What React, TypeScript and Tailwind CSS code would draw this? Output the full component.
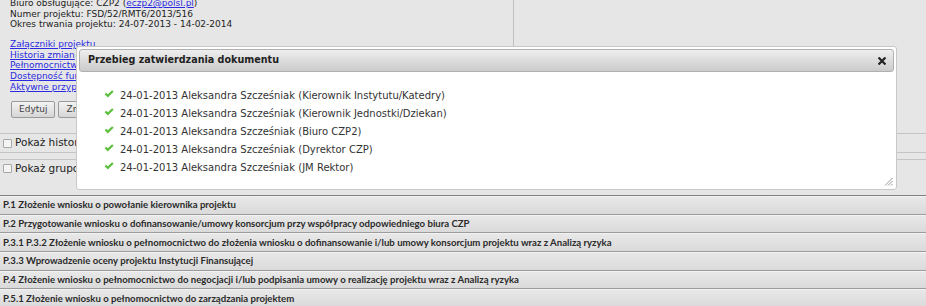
import React from "react";

const approvals = [
  "Kierownik Instytutu/Katedry",
  "Kierownik Jednostki/Dziekan",
  "Biuro CZP2",
  "Dyrektor CZP",
  "JM Rektor",
];

const steps = [
  "P.1 Złożenie wniosku o powołanie kierownika projektu",
  "P.2 Przygotowanie wniosku o dofinansowanie/umowy konsorcjum przy współpracy odpowiedniego biura CZP",
  "P.3.1 P.3.2 Złożenie wniosku o pełnomocnictwo do złożenia wniosku o dofinansowanie i/lub umowy konsorcjum projektu wraz z Analizą ryzyka",
  "P.3.3 Wprowadzenie oceny projektu Instytucji Finansującej",
  "P.4 Złożenie wniosku o pełnomocnictwo do negocjacji i/lub podpisania umowy o realizację projektu wraz z Analizą ryzyka",
  "P.5.1 Złożenie wniosku o pełnomocnictwo do zarządzania projektem",
];

function Check() {
  return (
    <svg width="10" height="8" viewBox="0 0 10 8" className="shrink-0">
      <path d="M0.6 4.2 L2.2 2.7 L3.8 4.3 L8.1 0.3 L9.6 1.8 L3.8 7.4 Z" fill="#5fbf3f" />
    </svg>
  );
}

function Box() {
  return (
    <span className="inline-block w-[9px] h-[9px] border border-[#a8a8a8] bg-[#f4f4f4] rounded-[1px] shrink-0" />
  );
}

export default function App() {
  return (
    <div
      className="relative w-[926px] h-[306px] overflow-hidden bg-[#e6e6e6] text-[#222]"
      style={{ fontFamily: '"DejaVu Sans", Verdana, sans-serif' }}
    >
      {/* top section */}
      <div className="flex h-[134px] border-b border-[#c4c4c4]">
        <div className="w-[514px] border-r border-[#c0c0c0] pl-[10px] text-[9px]">
          <div className="-mt-[2px] leading-[10.65px]">
            <div>
              Biuro obsługujące: CZP2 (<span className="text-[#2a2ae0] underline">eczp2@polsl.pl</span>)
            </div>
            <div>Numer projektu: FSD/52/RMT6/2013/516</div>
            <div>Okres trwania projektu: 24-07-2013 - 14-02-2014</div>
          </div>
          <div className="mt-[9px] leading-[10.7px] text-[#2a2ae0] underline">
            <div>Załączniki projektu</div>
            <div>Historia zmian</div>
            <div>Pełnomocnictwa</div>
            <div>Dostępność funkcji</div>
            <div>Aktywne przypomnienia</div>
          </div>
          <div className="mt-[8.5px] flex gap-[3px] pl-[1px]">
            <button className="h-[17px] px-[7px] text-[9px] text-[#444] border border-[#9a9a9a] rounded-[2px] bg-gradient-to-b from-[#f3f3f3] to-[#d6d6d6]">
              Edytuj
            </button>
            <button className="h-[17px] px-[7px] text-[9px] text-[#444] border border-[#9a9a9a] rounded-[2px] bg-gradient-to-b from-[#f3f3f3] to-[#d6d6d6]">
              Zmień status
            </button>
          </div>
        </div>
        <div className="flex-1" />
      </div>

      {/* checkbox rows */}
      <div className="h-[19px] border-b border-[#c4c4c4] flex items-center pl-[3px] gap-[3px] text-[10.5px]">
        <Box />
        <span>Pokaż historię zmian</span>
      </div>
      <div className="h-[7px] border-b border-[#c4c4c4]" />
      <div className="h-[17px] flex items-center pl-[3px] gap-[3px] text-[10.5px]">
        <Box />
        <span>Pokaż grupowo</span>
      </div>
      <div className="h-[18px]" />

      {/* list of steps */}
      <div className="border-t border-[#808080]">
        {steps.map((s) => (
          <div
            key={s}
            className="h-[18.7px] border-b border-[#9c9c9c] border-t border-t-[#f2f2f2] bg-gradient-to-b from-[#e8e8e8] to-[#dadada] flex items-center pl-[3px] text-[9.6px] font-bold text-[#2a2a2a] whitespace-nowrap"
            style={{ fontFamily: 'Lato, "Open Sans", sans-serif' }}
          >
            {s}
          </div>
        ))}
      </div>

      {/* dialog */}
      <div className="absolute left-[76px] top-[46px] w-[821px] h-[144px] bg-white border border-[#c8c8c8] rounded-[3px] p-[2px] flex flex-col">
        <div className="h-[23px] shrink-0 border border-[#b0b0b0] rounded-[3px] bg-gradient-to-b from-[#eeeeee] to-[#cbcbcb] flex items-center justify-between pl-[8px] pr-[7px]">
          <span className="text-[9.6px] font-bold text-[#222]">Przebieg zatwierdzania dokumentu</span>
          <svg width="8" height="8" viewBox="0 0 8 8">
            <path d="M1.3 1.3 L6.7 6.7 M6.7 1.3 L1.3 6.7" stroke="#222" strokeWidth="2.2" strokeLinecap="square" />
          </svg>
        </div>
        <div className="relative flex-1 pt-[14px] pl-[25px]">
          <div className="flex flex-col">
            {approvals.map((a) => (
              <div key={a} className="h-[18px] flex items-center gap-[6px] text-[10px] text-[#333]">
                <span className="-mt-[3px]">
                  <Check />
                </span>
                <span>24-01-2013 Aleksandra Szcześniak ({a})</span>
              </div>
            ))}
          </div>
          <svg className="absolute right-[1px] bottom-[1px]" width="9" height="9" viewBox="0 0 9 9">
            <path d="M8.5 1 L1 8.5 M8.5 4 L4 8.5 M8.5 7 L7 8.5" stroke="#8a8a8a" strokeWidth="0.9" />
          </svg>
        </div>
      </div>
    </div>
  );
}
